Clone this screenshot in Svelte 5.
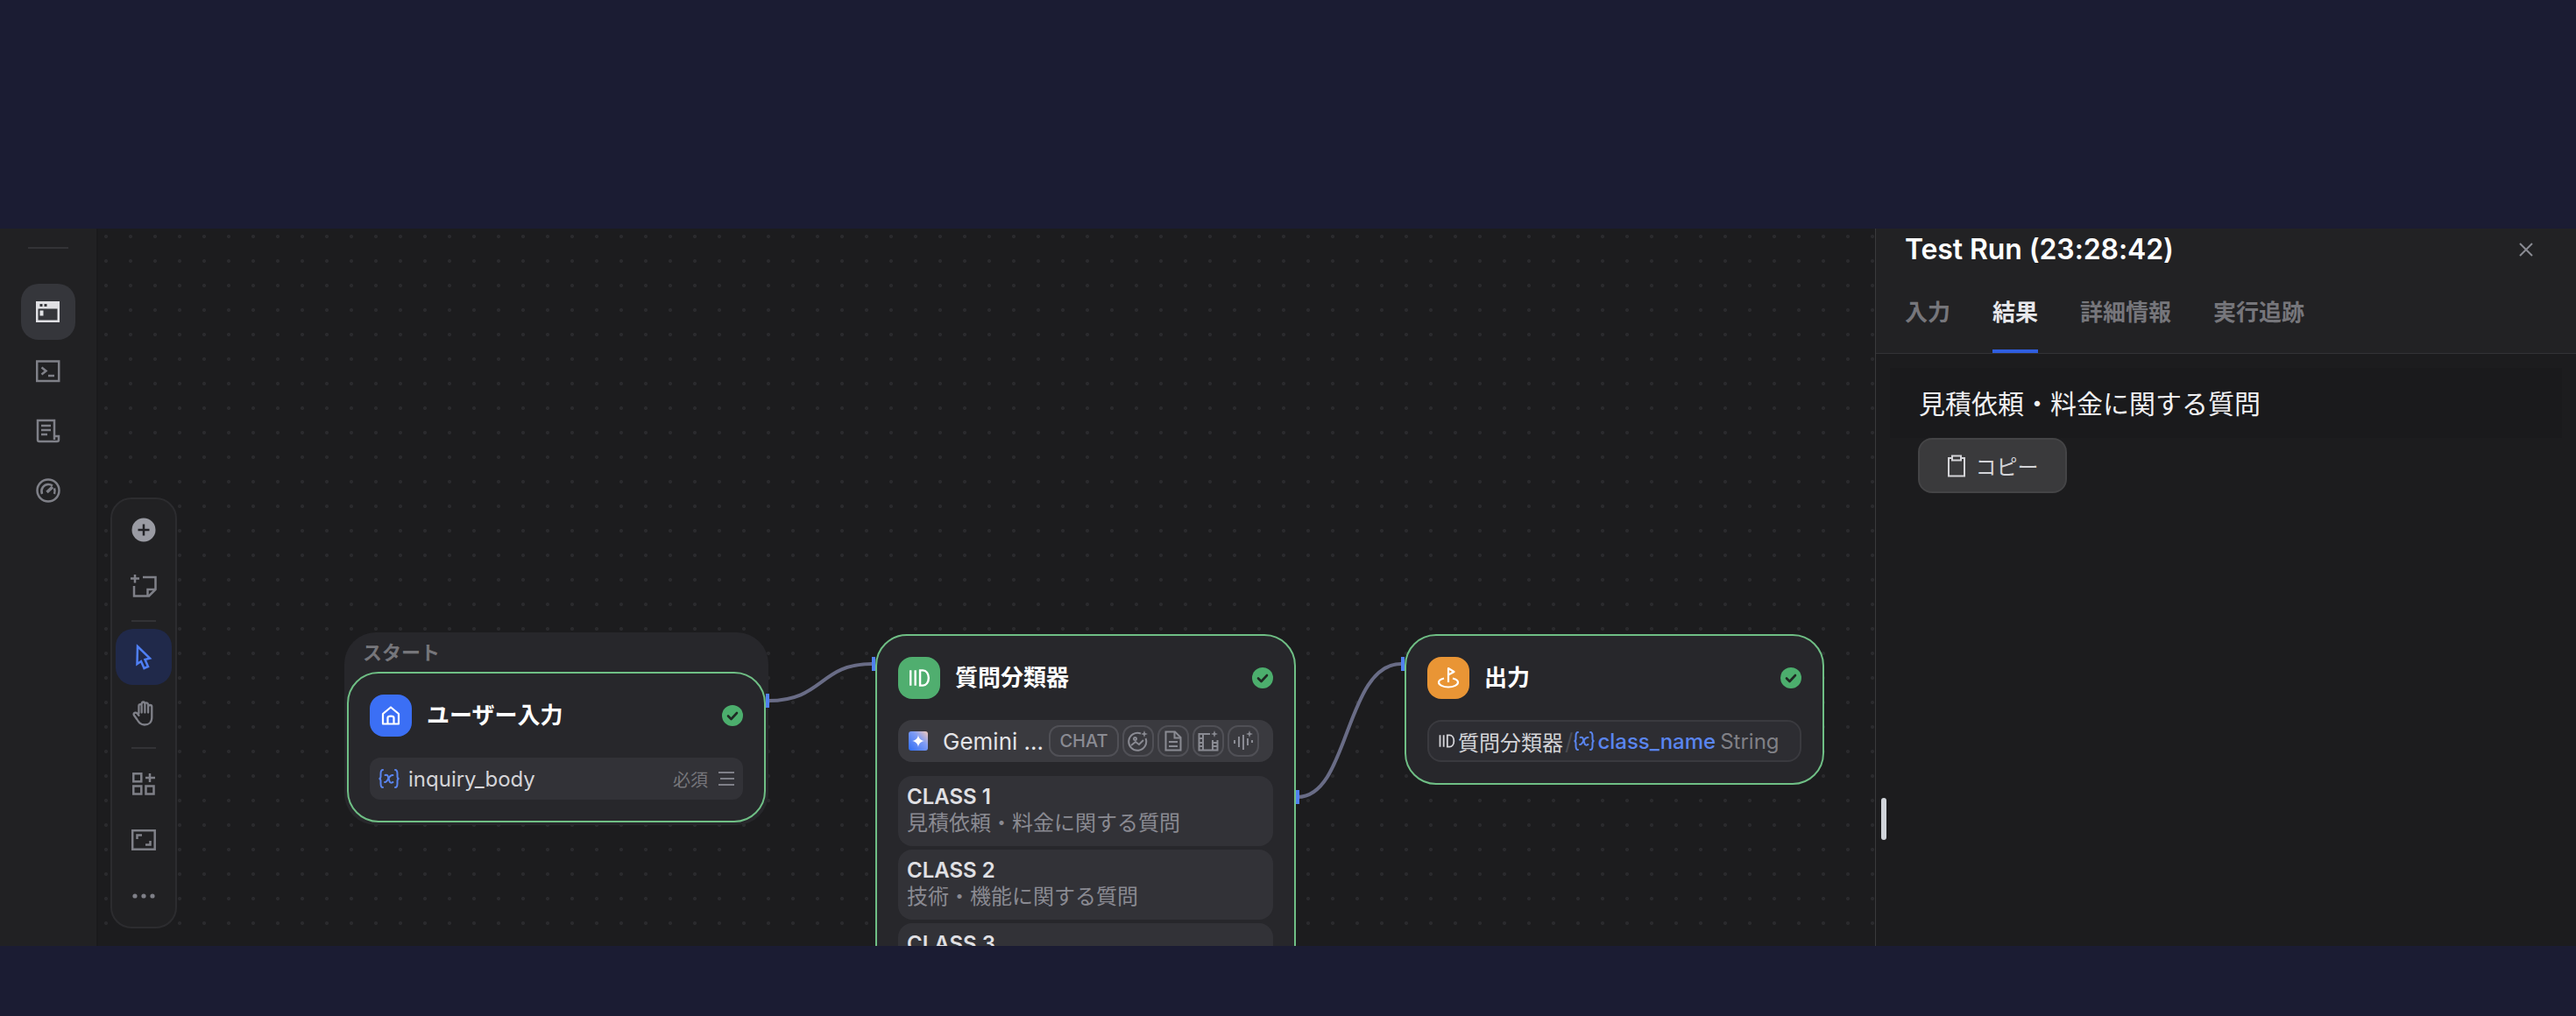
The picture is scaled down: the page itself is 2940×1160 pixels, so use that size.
<script>
	const dotPattern = 'radial-gradient(circle, #2a2a2d 1.8px, transparent 2.3px)';
	const classes = [
		{ name: 'CLASS 1', desc: '見積依頼・料金に関する質問' },
		{ name: 'CLASS 2', desc: '技術・機能に関する質問' },
		{ name: 'CLASS 3', desc: '' }
	];
	const tabs = ['入力', '結果', '詳細情報', '実行追跡'];
</script>

{#snippet varIcon()}
	<svg class="var" viewBox="0 0 26 26" fill="none" stroke="#5a85f0" stroke-width="2" stroke-linecap="round">
		<path d="M6 3C3.500 3 3.500 5 3.500 7.500V10.500C3.500 12 2.500 13 1.500 13C2.500 13 3.500 14 3.500 15.500V18.500C3.500 21 3.500 23 6 23" />
		<path d="M20 3C22.500 3 22.500 5 22.500 7.500V10.500C22.500 12 23.500 13 24.500 13C23.500 13 22.500 14 22.500 15.500V18.500C22.500 21 22.500 23 20 23" />
		<path d="M8.500 9C10.500 8.500 11.500 9 12 11L13.500 16C14 18 15.500 18 17.500 17" />
		<path d="M17.500 9C15.500 8.500 14 10 12.500 12.500C11 15.500 10 17.500 8 17" />
	</svg>
{/snippet}

{#snippet checkIcon()}
	<svg class="check" viewBox="0 0 24 24">
		<circle cx="12" cy="12" r="12" fill="#4cae6d" />
		<path d="M7 12.500L10.500 16L17 9" fill="none" stroke="#1f2a24" stroke-width="2.600" stroke-linecap="round" stroke-linejoin="round" />
	</svg>
{/snippet}

{#snippet barsIcon(size, stroke)}
	<svg class="bars" width={size} height={size} viewBox="0 0 24 24" fill="none" stroke={stroke} stroke-width="2.200">
		<path d="M3 4V20M8 4V20M13 4H16C19.500 4 22 7.500 22 12C22 16.500 19.500 20 16 20H13Z" />
	</svg>
{/snippet}

<div class="page">
	<div class="app">
		<aside class="sidebar">
			<div class="rule"></div>
			<div class="nav active">
				<svg width="28" height="26" viewBox="0 0 28 26"><path fill="#e0e0e4" fill-rule="evenodd" d="M0 1H27V25H0ZM2.500 9.500V22.500H24.500V9.500ZM4.500 4V7H7.500V4ZM9.500 4V7H12.500V4Z" /><rect x="4.500" y="11.500" width="4" height="6" fill="#e0e0e4" /></svg>
			</div>
			<div class="nav">
				<svg width="28" height="26" viewBox="0 0 28 26" fill="none" stroke="#7f8088" stroke-width="2.500"><rect x="1.200" y="1.500" width="25" height="22.500" /><path d="M6.500 8.500L11.500 12.500L6.500 16.500" /><path d="M14 18H21" /></svg>
			</div>
			<div class="nav">
				<svg width="28" height="28" viewBox="0 0 28 28" fill="none" stroke="#7f8088" stroke-width="2.500"><path d="M21 19V2H2V24C2 25.500 2.500 26 4 26H24C25.500 26 26 25.500 26 24V20H21V24" /><path d="M6 8H17M6 13H17M6 18H13" /></svg>
			</div>
			<div class="nav">
				<svg width="28" height="28" viewBox="0 0 28 28" fill="none" stroke="#7f8088" stroke-width="2.500"><circle cx="14" cy="14" r="12.500" /><path d="M7 18C5 12 9 7 14 7C16 7 17.500 7.500 19 8.500" /><path d="M21 11.500C21.800 13.500 21.800 15.500 21 18" /><path d="M12.500 16L19 10" stroke-width="3.500" /></svg>
			</div>
		</aside>

		<main class="canvas" style:background-image={dotPattern}>
			<svg class="edges" width="2030" height="819" fill="none" stroke="#696c86" stroke-width="4">
				<path d="M767 539C830 539 825 497 885 497" />
				<path d="M1371 649C1430 649 1425 497 1489 497" />
			</svg>

			<div class="toolbar">
				<div class="tool">
					<svg width="28" height="28" viewBox="0 0 28 28"><circle cx="14" cy="14" r="13.500" fill="#9a9ba3" /><path d="M14 7.500V20.500M7.500 14H20.500" stroke="#222226" stroke-width="2.500" /></svg>
				</div>
				<div class="tool">
					<svg width="30" height="26" viewBox="0 0 30 26" fill="none" stroke="#7f8088" stroke-width="2.500"><path d="M0 4.500H10M5 0V9.500" /><path d="M4 13V24.500H21L28.500 17V3H14" /><path d="M28 17H19.500V24" /></svg>
				</div>
				<div class="sep"></div>
				<div class="tool on">
					<svg width="22" height="32" viewBox="14 4 22 32" fill="none" stroke="#4f7ff5" stroke-width="2.500"><path d="M18 8L32 21.500L26.500 23L30 31L25.500 33L22 25L17.500 28Z" /></svg>
				</div>
				<div class="tool">
					<svg width="26" height="31" viewBox="0 0 28 32" fill="none" stroke="#7f8088" stroke-width="2.500" stroke-linecap="round"><path d="M8 16V7C8 4 11.500 4 11.500 7V15M11.500 5C11.500 1 15.500 1 15.500 5V15M15.500 5C15.500 2 19.500 2 19.500 6V15M19.500 8C19.500 5 24 5 24 8V21C24 27 20 30 15 30C10 30 8 27 5.500 23L2 18C1 15.500 4 14 6 16L8 18.500" /></svg>
				</div>
				<div class="sep"></div>
				<div class="tool">
					<svg width="26" height="26" viewBox="0 0 26 26" fill="none" stroke="#7f8088" stroke-width="2.500"><rect x="1.300" y="1.300" width="9" height="9" /><rect x="1.300" y="15.500" width="9" height="9" /><rect x="15.500" y="15.500" width="9" height="9" /><path d="M20 1V11M15 6H26" /></svg>
				</div>
				<div class="tool">
					<svg width="28" height="24" viewBox="0 0 28 24" fill="none" stroke="#7f8088" stroke-width="2.500"><rect x="1.200" y="1.200" width="25.500" height="21.500" /><path d="M6.500 11V6.500H12M21.500 13V17.500H16" /></svg>
				</div>
				<div class="tool">
					<svg width="26" height="6" viewBox="0 0 26 6" fill="#7f8088"><circle cx="3" cy="3" r="2.600" /><circle cx="13" cy="3" r="2.600" /><circle cx="23" cy="3" r="2.600" /></svg>
				</div>
			</div>

			<div class="group">
				<div class="group-label">スタート</div>
				<div class="node">
					<div class="node-head">
						<div class="node-icon blue">
							<svg width="24" height="24" viewBox="0 0 24 24" fill="none" stroke="#fff" stroke-width="2.200" stroke-linejoin="round"><path d="M3 10L12 2.500L21 10V21.500H3Z" /><path d="M8.500 21.500V14.500C8.500 12 15.500 12 15.500 14.500V21.500" /></svg>
						</div>
						<div class="node-title">ユーザー入力</div>
						{@render checkIcon()}
					</div>
					<div class="row">
						{@render varIcon()}
						<span class="var-name">inquiry_body</span>
						<span class="required">必須</span>
						<svg width="18" height="18" viewBox="0 0 18 18" stroke="#7f8088" stroke-width="2"><path d="M0 2H18M2 9H18M0 16H18" /></svg>
					</div>
					<div class="handle out"></div>
				</div>
			</div>

			<div class="node classifier">
				<div class="handle in"></div>
				<div class="node-head">
					<div class="node-icon green">{@render barsIcon(26, '#fff')}</div>
					<div class="node-title">質問分類器</div>
					{@render checkIcon()}
				</div>
				<div class="model">
					<svg class="gem" width="22" height="22" viewBox="0 0 22 22">
						<defs><linearGradient id="gem" x1="0" y1="1" x2="1" y2="0"><stop offset="0" stop-color="#2f6df6" /><stop offset="0.600" stop-color="#7f9cf5" /><stop offset="1" stop-color="#f3c9b8" /></linearGradient></defs>
						<rect width="22" height="22" rx="3" fill="url(#gem)" />
						<path d="M11 4C11.500 8 14 10.500 18 11C14 11.500 11.500 14 11 18C10.500 14 8 11.500 4 11C8 10.500 10.500 8 11 4Z" fill="#fff" />
					</svg>
					<span class="model-name">Gemini ...</span>
					<span class="badge chat">CHAT</span>
					<span class="badge">
						<svg width="24" height="24" viewBox="0 0 24 24" fill="none" stroke="#8a8b93" stroke-width="2"><path d="M15 3.500A10 10 0 1 0 20.500 9" /><circle cx="8.500" cy="9.500" r="1.500" /><path d="M4 17L9 13L13 16L18 11" /><path d="M19 0L20 3L23 4L20 5L19 8L18 5L15 4L18 3Z" fill="#8a8b93" stroke="none" /></svg>
					</span>
					<span class="badge">
						<svg width="20" height="24" viewBox="0 0 20 24" fill="none" stroke="#8a8b93" stroke-width="2"><path d="M1.500 1.500H12L18.500 8V22.500H1.500Z" /><path d="M11.500 1.500V8.500H18.500M5 13H15M5 18H15" /></svg>
					</span>
					<span class="badge">
						<svg width="24" height="24" viewBox="0 0 24 24" fill="none" stroke="#8a8b93" stroke-width="2"><path d="M14 4H1.500V22.500H22.500V11" /><path d="M6 4V22.500M17 11V22.500M1.500 9H6M1.500 14H6M1.500 18H6M17 14H22.500M17 18H22.500" /><path d="M19 0L20 3L23 4L20 5L19 8L18 5L15 4L18 3Z" fill="#8a8b93" stroke="none" /></svg>
					</span>
					<span class="badge">
						<svg width="24" height="24" viewBox="0 0 24 24" fill="none" stroke="#8a8b93" stroke-width="2"><path d="M2 11V15M7 7V19M12 5V22M17 9V17M22 11V14" /><path d="M19 0L20 3L23 4L20 5L19 8L18 5L15 4L18 3Z" fill="#8a8b93" stroke="none" /></svg>
					</span>
				</div>
				<div class="class-list">
					{#each classes as c}
						<div class="class-row">
							<div class="class-name">{c.name}</div>
							<div class="class-desc">{c.desc}</div>
						</div>
					{/each}
				</div>
				<div class="handle side"></div>
			</div>

			<div class="node output">
				<div class="handle in"></div>
				<div class="node-head">
					<div class="node-icon orange">
						<svg width="26" height="26" viewBox="0 0 26 26" fill="none" stroke="#fff" stroke-width="2.200"><path d="M13 18V2L19.500 6L13 9.500" stroke-linejoin="round" /><path d="M8 13.500C4 14.500 2 16 2 18C2 21 7 23.500 13 23.500C19 23.500 24 21 24 18C24 16 22 14.500 18 13.500" /></svg>
					</div>
					<div class="node-title">出力</div>
					{@render checkIcon()}
				</div>
				<div class="ref">
					{@render barsIcon(20, '#d4d4d8')}
					<span class="ref-node">質問分類器</span>
					<span class="slash">/</span>
					{@render varIcon()}
					<span class="ref-var">class_name</span>
					<span class="ref-type">String</span>
				</div>
			</div>
		</main>

		<section class="panel">
			<div class="panel-head">
				<div class="title-row">
					<div class="title">Test Run (23:28:42)</div>
					<svg width="18" height="18" viewBox="0 0 18 18" stroke="#8a8b93" stroke-width="2"><path d="M2 2L16 16M16 2L2 16" /></svg>
				</div>
				<div class="tabs">
					{#each tabs as t, i}
						<div class="tab" class:current={i === 1}>{t}</div>
					{/each}
				</div>
			</div>
			<div class="panel-body">
				<div class="result">見積依頼・料金に関する質問</div>
				<button class="copy">
					<svg width="22" height="26" viewBox="0 0 22 26" fill="none" stroke="#d4d4d8" stroke-width="2"><path d="M6 4H2V24.500H20V4H16" /><rect x="6" y="1.500" width="10" height="5" /></svg>
					コピー
				</button>
			</div>
			<div class="grip"></div>
		</section>
	</div>
</div>

<style>
	:global(body) {
		background: #1b1c33;
	}

	.page {
		height: 1160px;
		padding: 261px 0 80px;
		box-sizing: border-box;
		background: #1b1c33;
		font-family: Inter, 'Noto Sans CJK JP', sans-serif;
		overflow: hidden;
	}

	.app {
		display: flex;
		height: 819px;
		overflow: hidden;
		background: #1c1c1e;
	}

	.sidebar {
		width: 112px;
		flex: none;
		display: flex;
		flex-direction: column;
		align-items: center;
		gap: 4px;
		padding-top: 21px;
		box-sizing: border-box;
		background: #212123;
		border-right: 2px solid #1a1a1c;
	}

	.rule {
		width: 46px;
		height: 2px;
		margin-bottom: 36px;
		background: #333336;
	}

	.nav {
		width: 62px;
		height: 64px;
		display: flex;
		align-items: center;
		justify-content: center;
		border-radius: 20px;
	}

	.nav.active {
		background: #35363b;
	}

	.canvas {
		position: relative;
		width: 2028px;
		flex: none;
		background-color: #1c1c1e;
		background-size: 28px 28px;
		background-position: -5px -5px;
		overflow: hidden;
	}

	.edges {
		position: absolute;
		left: -2px;
		top: 0;
	}

	.toolbar {
		position: absolute;
		left: 14px;
		top: 307px;
		width: 76px;
		height: 492px;
		box-sizing: border-box;
		padding: 3px 5px;
		display: flex;
		flex-direction: column;
		align-items: center;
		background: #212123;
		border: 2px solid #2c2c2f;
		border-radius: 24px;
	}

	.tool {
		width: 64px;
		height: 64px;
		flex: none;
		display: flex;
		align-items: center;
		justify-content: center;
		border-radius: 20px;
	}

	.tool.on {
		background: #20294a;
	}

	.sep {
		width: 28px;
		height: 2px;
		flex: none;
		margin: 7px 0 8px;
		background: #333336;
	}

	.group {
		position: absolute;
		left: 281px;
		top: 461px;
		width: 484px;
		padding: 0 3px 3px;
		box-sizing: border-box;
		background: #27272b;
		border-radius: 36px;
	}

	.group-label {
		height: 45px;
		padding: 10px 0 0 18px;
		box-sizing: border-box;
		font-size: 22px;
		line-height: 26px;
		font-weight: 600;
		color: #76767b;
	}

	.node {
		position: relative;
		width: 478px;
		box-sizing: border-box;
		padding: 24px;
		background: #27272b;
		border: 2px solid #6fbf85;
		border-radius: 36px;
	}

	.classifier {
		position: absolute;
		left: 887px;
		top: 463px;
		width: 480px;
		height: 520px;
	}

	.output {
		position: absolute;
		left: 1491px;
		top: 463px;
		width: 479px;
		height: 172px;
	}

	.node-head {
		display: flex;
		align-items: center;
		height: 48px;
		margin-bottom: 24px;
	}

	.node-icon {
		width: 48px;
		height: 48px;
		flex: none;
		display: flex;
		align-items: center;
		justify-content: center;
		margin-right: 17px;
		border-radius: 16px;
	}

	.blue {
		background: #3b6ff5;
	}

	.green {
		background: #50ae6f;
	}

	.orange {
		background: #e99535;
	}

	.node-title {
		flex: 1;
		font-size: 26px;
		line-height: 34px;
		font-weight: 700;
		color: #fff;
	}

	.check {
		width: 24px;
		height: 24px;
		flex: none;
	}

	.var {
		width: 26px;
		height: 26px;
		flex: none;
	}

	.bars {
		flex: none;
	}

	.row {
		height: 48px;
		display: flex;
		align-items: center;
		padding: 0 10px 0 9px;
		background: #323237;
		border-radius: 12px;
	}

	.var-name {
		flex: 1;
		margin-left: 9px;
		font-size: 24px;
		color: #d4d4d8;
	}

	.required {
		margin-right: 12px;
		font-size: 20px;
		color: #76767b;
	}

	.handle {
		position: absolute;
		width: 4px;
		height: 16px;
		background: #5080f0;
	}

	.handle.out {
		right: -6px;
		top: 23px;
	}

	.handle.in {
		left: -6px;
		top: 24px;
	}

	.handle.side {
		right: -6px;
		top: 176px;
	}

	.model {
		height: 48px;
		display: flex;
		align-items: center;
		gap: 4px;
		padding: 0 10px 0 12px;
		box-sizing: border-box;
		background: #3a3a3f;
		border-radius: 16px;
	}

	.gem {
		flex: none;
		margin-right: 13px;
	}

	.model-name {
		width: 117px;
		flex: none;
		white-space: nowrap;
		font-size: 26px;
		color: #e4e4e8;
	}

	.badge {
		width: 36px;
		height: 36px;
		flex: none;
		box-sizing: border-box;
		display: flex;
		align-items: center;
		justify-content: center;
		border: 2px solid #505056;
		border-radius: 12px;
	}

	.badge.chat {
		width: 80px;
		font-size: 20px;
		font-weight: 500;
		color: #8a8b93;
	}

	.class-list {
		display: flex;
		flex-direction: column;
		gap: 4px;
		margin-top: 16px;
	}

	.class-row {
		height: 80px;
		padding: 8px 10px 0;
		box-sizing: border-box;
		background: #323237;
		border-radius: 16px;
	}

	.class-name {
		font-size: 24px;
		line-height: 32px;
		font-weight: 600;
		color: #e0e0e4;
	}

	.class-desc {
		font-size: 24px;
		line-height: 28px;
		color: #8a8a92;
	}

	.ref {
		height: 48px;
		display: flex;
		align-items: center;
		padding: 0 10px;
		box-sizing: border-box;
		white-space: nowrap;
		background: #2d2d32;
		border: 2px solid #3a3a3f;
		border-radius: 16px;
	}

	.ref-node {
		margin-left: 3px;
		font-size: 24px;
		color: #d4d4d8;
	}

	.slash {
		margin: 0 0 0 2px;
		font-size: 26px;
		color: #4a4a50;
	}

	.ref-var {
		margin-left: 2px;
		font-size: 24px;
		font-weight: 500;
		color: #5a85f0;
	}

	.ref-type {
		margin-left: 5px;
		font-size: 24px;
		color: #808086;
	}

	.panel {
		position: relative;
		flex: 1;
		display: flex;
		flex-direction: column;
		background: #1c1c1e;
		border-left: 1px solid #3a3a3c;
	}

	.panel-head {
		height: 143px;
		flex: none;
		padding: 0 32px 0 33px;
		box-sizing: border-box;
		background: #222224;
		border-bottom: 1px solid #333336;
	}

	.title-row {
		height: 46px;
		box-sizing: border-box;
		padding: 2px 16px 0 0;
		display: flex;
		align-items: center;
		justify-content: space-between;
	}

	.title {
		font-size: 32px;
		line-height: 44px;
		font-weight: 600;
		letter-spacing: -0.1px;
		color: #fff;
	}

	.tabs {
		display: flex;
		gap: 48px;
		margin-top: 28px;
	}

	.tab {
		height: 68px;
		box-sizing: border-box;
		padding-top: 6px;
		font-size: 26px;
		line-height: 32px;
		font-weight: 600;
		color: #76767b;
	}

	.tab.current {
		color: #e8e8ec;
		border-bottom: 4px solid #2f5ee0;
	}

	.panel-body {
		padding: 16px 16px 0;
	}

	.result {
		height: 80px;
		padding: 0 0 3px 33px;
		box-sizing: border-box;
		display: flex;
		align-items: center;
		font-size: 30px;
		color: #f0f0f2;
		background: #1a1a1c;
	}

	.copy {
		height: 63px;
		width: 170px;
		margin-left: 32px;
		display: flex;
		align-items: center;
		justify-content: center;
		gap: 11px;
		font-family: inherit;
		font-size: 24px;
		color: #d4d4d8;
		background: #3a3a3c;
		border: 2px solid #444446;
		border-radius: 16px;
	}

	.grip {
		position: absolute;
		left: 6px;
		top: 650px;
		width: 6px;
		height: 48px;
		background: #d0d4da;
		border-radius: 3px;
	}
</style>
